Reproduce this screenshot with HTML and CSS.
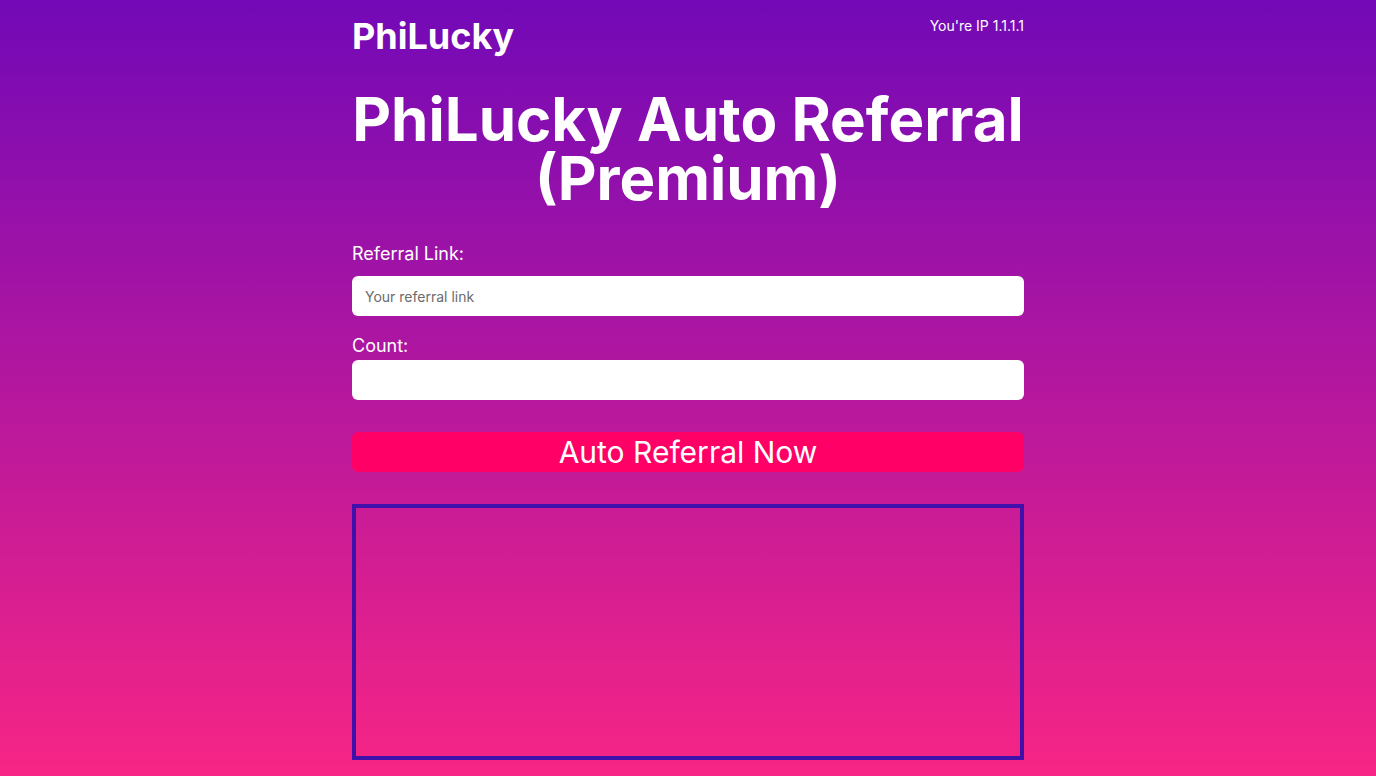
FILE: index.html
```html
<!DOCTYPE html>
<html>
<head>
<meta charset="utf-8">
<link rel="stylesheet" href="styles.css">
</head>
<body>
<div class="wrap">
  <header class="top">
    <div class="brand">PhiLucky</div>
    <div class="ip">You're IP 1.1.1.1</div>
  </header>
  <h1 class="title">PhiLucky Auto Referral (Premium)</h1>
  <form class="form">
    <label class="label" for="link">Referral Link:</label>
    <input class="field" id="link" type="text" placeholder="Your referral link">
    <label class="label label-count" for="count">Count:</label>
    <input class="field" id="count" type="text">
    <button class="btn" type="button">Auto Referral Now</button>
  </form>
  <div class="output"></div>
</div>
</body>
</html>
```
FILE: styles.css
```css
html, body {
  margin: 0;
  padding: 0;
}
body {
  min-height: 776px;
  background: linear-gradient(180deg, #7209b7 0%, #f72585 100%);
  font-family: Inter, "Noto Sans", sans-serif;
  color: #fff;
}
.wrap {
  width: 672px;
  margin: 0 auto;
  padding-top: 14px;
}
.top {
  display: flex;
  justify-content: space-between;
  align-items: flex-start;
}
.brand {
  font-size: 36px;
  font-weight: 700;
  line-height: 44px;
}
.ip {
  font-size: 14px;
  line-height: 20px;
  margin-top: 2px;
}
.title {
  margin: 32px 0 0;
  text-align: center;
  font-size: 60px;
  font-weight: 700;
  line-height: 59px;
}
.form {
  display: flex;
  flex-direction: column;
  margin-top: 32px;
}
.label {
  font-size: 18px;
  line-height: 28px;
  margin-bottom: 8px;
}
.label-count {
  margin-top: 16px;
  margin-bottom: 0;
}
.field {
  box-sizing: border-box;
  height: 40px;
  border: 0;
  border-radius: 6px;
  background: #fff;
  padding: 0 13px;
  font-family: Inter, "Noto Sans", sans-serif;
  font-size: 14px;
  color: #333;
  outline: none;
}
.field::placeholder {
  color: #6b6b6b;
}
.btn {
  margin-top: 32px;
  height: 40px;
  border: 0;
  border-radius: 6px;
  background: #ff0066;
  color: #fff;
  font-family: Inter, "Noto Sans", sans-serif;
  font-size: 30px;
  line-height: 40px;
  padding: 0;
}
.output {
  box-sizing: border-box;
  margin-top: 32px;
  height: 256px;
  border: 4px solid #4010aa;
}
```
